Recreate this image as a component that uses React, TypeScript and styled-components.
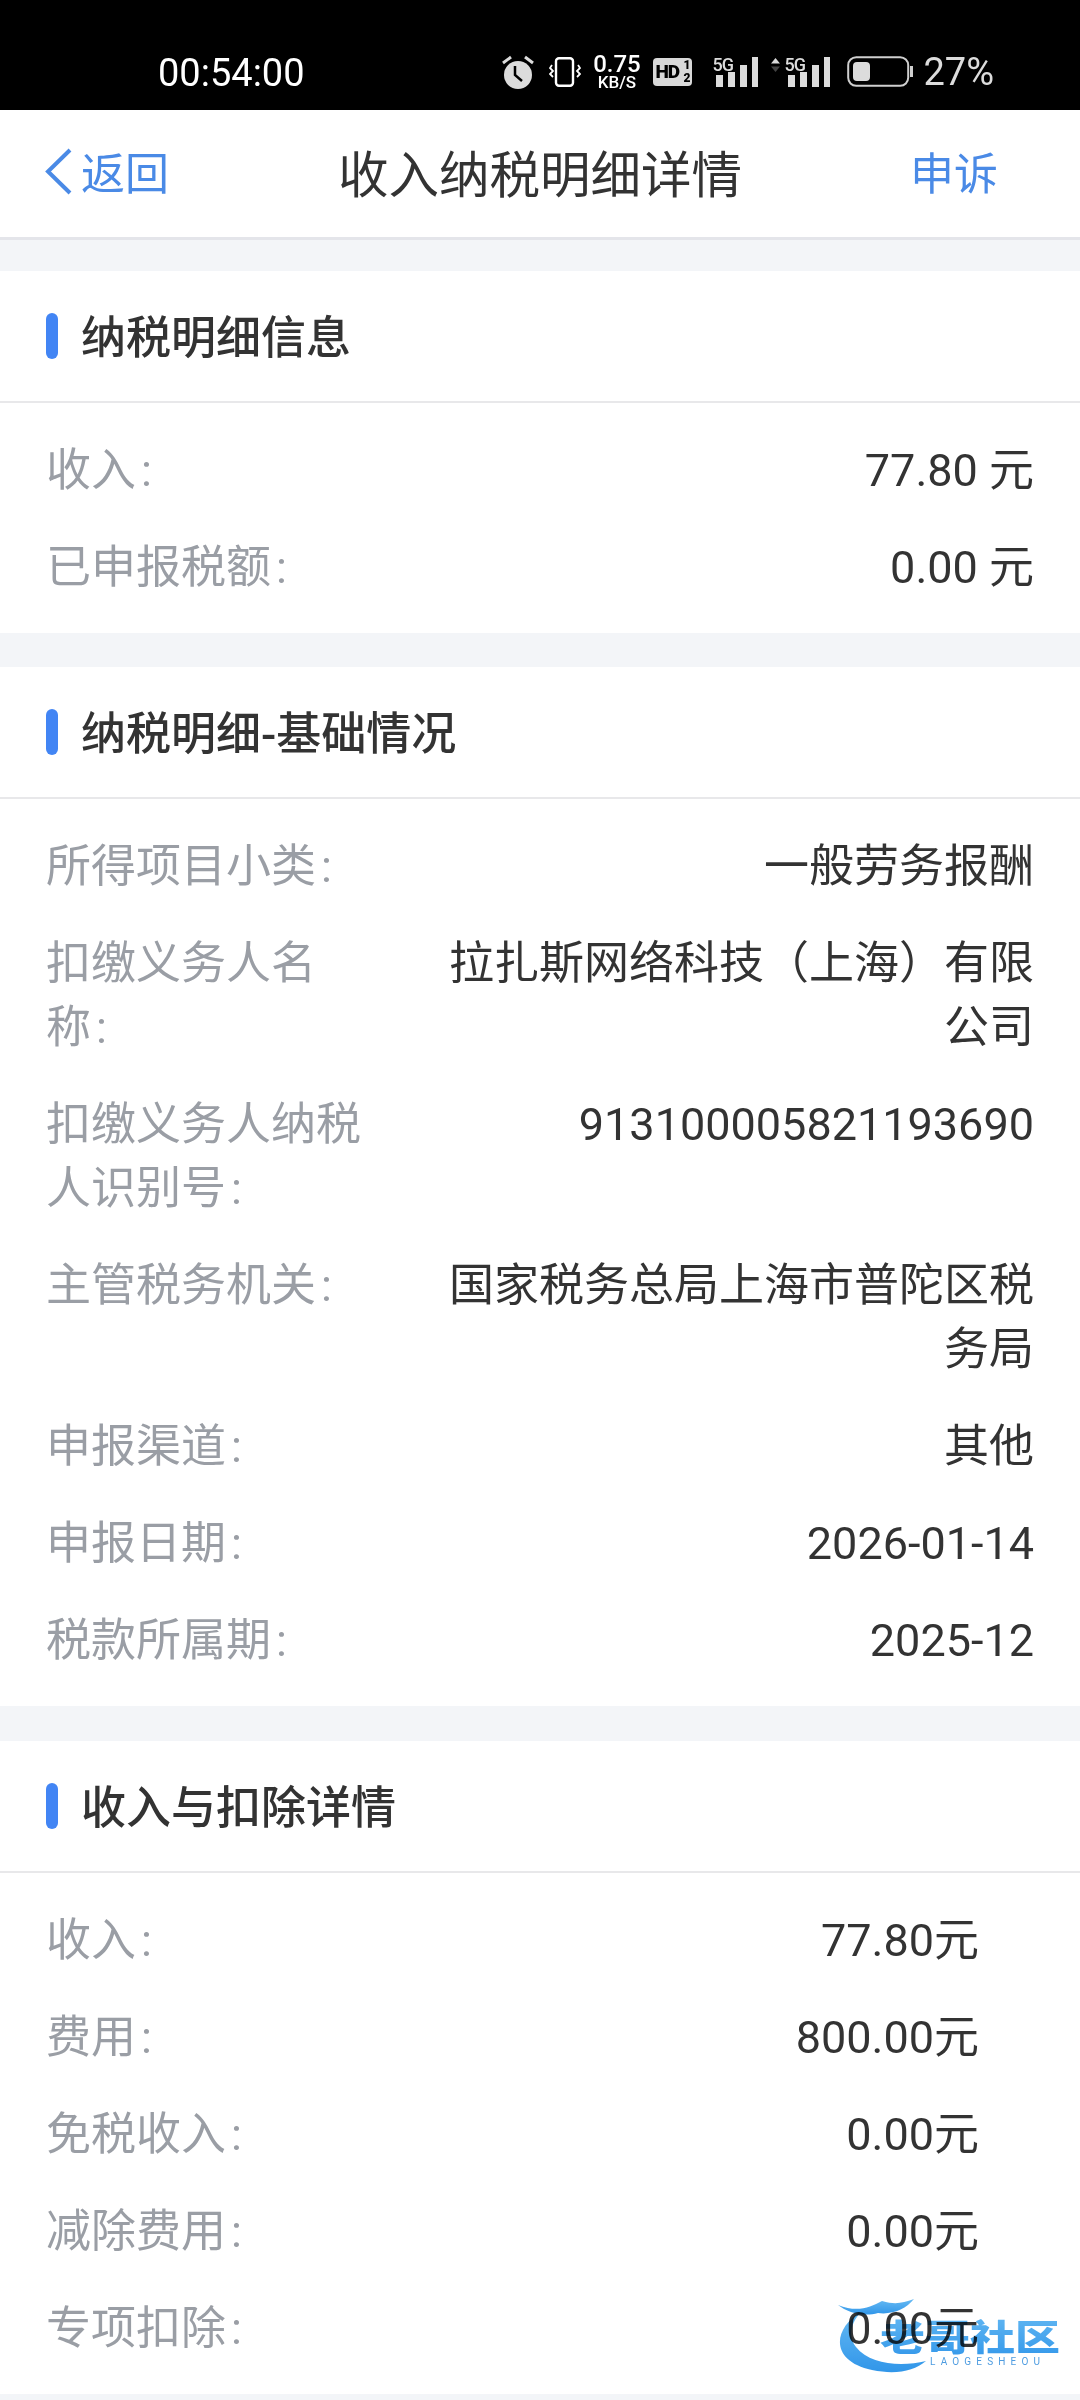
import React from "react";
import styled, { createGlobalStyle } from "styled-components";

const Global = createGlobalStyle`
  html, body { margin: 0; padding: 0; background: #f3f5f8; }
  body { font-family: Roboto, "Noto Sans CJK SC", sans-serif; }
`;

const Page = styled.div`
  position: relative;
  width: 1080px;
  height: 2400px;
  overflow: hidden;
  background: #f3f5f8;
`;

const StatusBar = styled.div`
  height: 110px;
  background: #000;
  color: #e0e0e0;
  display: flex;
  align-items: flex-start;
  padding: 50px 86px 0 158px;
  box-sizing: border-box;
`;
const Time = styled.div`
  color: #fff;
  font-size: 38px;
  line-height: 46px;
`;
const StatusIcons = styled.div`
  margin-left: auto;
  display: flex;
  align-items: center;
  height: 44px;
`;
const Speed = styled.div`
  display: flex;
  flex-direction: column;
  align-items: center;
  width: 47px;
  margin: 0 13px 0 12px;
  color: #fff;
  font-weight: 500;
`;
const SpeedTop = styled.span`
  font-size: 24px;
  line-height: 20px;
`;
const SpeedBottom = styled.span`
  font-size: 17px;
  line-height: 16px;
`;
const HdBadge = styled.div`
  position: relative;
  width: 39px;
  height: 28px;
  background: #d8d8d8;
  border-radius: 4px;
  color: #000;
  font-size: 19px;
  font-weight: 900;
  line-height: 28px;
  padding-left: 2px;
  box-sizing: border-box;
  letter-spacing: -1px;
`;
const HdSub = styled.span`
  position: absolute;
  right: 2px;
  top: 1px;
  font-size: 12px;
  line-height: 13px;
  text-align: center;
  letter-spacing: 0;
`;
const Signal = styled.div<{ $w: number; $ml: number }>`
  position: relative;
  width: ${(p) => p.$w}px;
  height: 30px;
  margin-left: ${(p) => p.$ml}px;
`;
const SignalLabel = styled.span<{ $l: number }>`
  position: absolute;
  font-size: 18px;
  line-height: 15px;
  font-weight: 500;
  color: #dcdcdc;
  left: ${(p) => p.$l}px;
  top: 0;
  letter-spacing: -1px;
`;
const SignalBars = styled.svg`
  position: absolute;
  right: 0;
  top: 0;
`;
const Percent = styled.div`
  margin-left: 10px;
  font-size: 38px;
  line-height: 44px;
  color: #dcdcdc;
`;

const Nav = styled.div`
  height: 130px;
  box-sizing: border-box;
  background: #fff;
  border-bottom: 3px solid #e4e5ea;
  display: grid;
  grid-template-columns: 1fr auto 1fr;
  align-items: center;
  padding: 0 82px 5px;
`;
const Back = styled.div`
  display: flex;
  align-items: center;
  gap: 9px;
  margin-left: -37px;
  color: #4a8ae6;
  font-size: 44px;
`;
const NavTitle = styled.div`
  font-size: 50.5px;
  color: #333;
`;
const NavAction = styled.div`
  justify-self: end;
  color: #4a8ae6;
  font-size: 44px;
`;

const Section = styled.section<{ $top: number }>`
  margin-top: ${(p) => p.$top}px;
  background: #fff;
`;
const SectionHeader = styled.div`
  height: 132px;
  box-sizing: border-box;
  border-bottom: 2px solid #e8e8ea;
  display: flex;
  align-items: center;
  padding-left: 46px;
  gap: 23px;
`;
const Bar = styled.i`
  width: 12px;
  height: 46px;
  border-radius: 6px;
  background: #4285f4;
`;
const SectionTitle = styled.h2`
  margin: 6px 0 0;
  font-size: 45px;
  line-height: 64px;
  font-weight: 500;
  color: #333;
`;
const Body = styled.div`
  padding: 36px 46px 0;
`;
const Row = styled.div`
  display: flex;
  justify-content: space-between;
  align-items: flex-start;
  padding-bottom: 33px;
  font-size: 45px;
  line-height: 64px;
`;
const Label = styled.div`
  width: 322px;
  color: #9a9ea5;
`;
const Colon = styled.span`
  padding-left: 5px;
`;
const Value = styled.div<{ $inset?: boolean }>`
  width: 600px;
  text-align: right;
  color: #333;
  padding-right: ${(p) => (p.$inset ? 55 : 0)}px;
  box-sizing: border-box;
  word-break: break-all;
`;

const Watermark = styled.svg`
  position: absolute;
  left: 830px;
  top: 2295px;
  mix-blend-mode: multiply;
  filter: blur(0.7px);
  opacity: 0.92;
`;

const Bars = () => (
  <SignalBars width="46" height="30" viewBox="0 0 46 30">
    <rect x="4" y="18" width="7" height="12" fill="#dcdcdc" />
    <rect x="16" y="15" width="7" height="15" fill="#dcdcdc" />
    <rect x="28" y="8" width="7" height="22" fill="#dcdcdc" />
    <rect x="40" y="0" width="6" height="30" fill="#dcdcdc" />
  </SignalBars>
);

const info = [["收入", "77.80 元"], ["已申报税额", "0.00 元"]];
const basics = [
  ["所得项目小类", "一般劳务报酬"],
  ["扣缴义务人名称", "拉扎斯网络科技（上海）有限公司"],
  ["扣缴义务人纳税人识别号", "913100005821193690"],
  ["主管税务机关", "国家税务总局上海市普陀区税务局"],
  ["申报渠道", "其他"],
  ["申报日期", "2026-01-14"],
  ["税款所属期", "2025-12"],
];
const details = [
  ["收入", "77.80元"],
  ["费用", "800.00元"],
  ["免税收入", "0.00元"],
  ["减除费用", "0.00元"],
  ["专项扣除", "0.00元"],
];

const Rows = ({ items, inset }: { items: string[][]; inset?: boolean }) => (
  <Body>
    {items.map(([k, v]) => (
      <Row key={k}>
        <Label>
          {k}
          <Colon>:</Colon>
        </Label>
        <Value $inset={inset}>{v}</Value>
      </Row>
    ))}
  </Body>
);

export default function App() {
  return (
    <Page>
      <Global />
      <StatusBar>
        <Time>00:54:00</Time>
        <StatusIcons>
          <svg width="32" height="34" viewBox="0 0 32 34">
            <path d="M1 8 L9 2 M31 8 L23 2" stroke="#dcdcdc" strokeWidth="3" />
            <circle cx="16" cy="20" r="14" fill="#dcdcdc" />
            <path d="M13 11 V20 L20 26" stroke="#000" strokeWidth="2.5" fill="none" />
          </svg>
          <svg width="32" height="30" viewBox="0 0 32 30" style={{ marginLeft: 15 }}>
            <rect x="7" y="1.2" width="17" height="27.5" rx="3" fill="none" stroke="#fff" strokeWidth="2.4" />
            <path d="M3 8 L1 11 L4 14 L1 17 L4 20 M29 8 L31 11 L28 14 L31 17 L28 20" fill="none" stroke="#fff" strokeWidth="1.8" />
          </svg>
          <Speed>
            <SpeedTop>0.75</SpeedTop>
            <SpeedBottom>KB/S</SpeedBottom>
          </Speed>
          <HdBadge>
            HD
            <HdSub>
              1
              <br />2
            </HdSub>
          </HdBadge>
          <Signal $w={46} $ml={20}>
            <SignalLabel $l={0}>5G</SignalLabel>
            <Bars />
          </Signal>
          <Signal $w={60} $ml={12}>
            <svg width="11" height="14" viewBox="0 0 11 14" style={{ position: "absolute", left: 0, top: 1 }}>
              <path d="M5.5 0 L10 5.5 H1 Z" fill="#dcdcdc" />
              <path d="M5.5 14 L10 8.5 H1 Z" fill="#444" />
            </svg>
            <SignalLabel $l={14}>5G</SignalLabel>
            <Bars />
          </Signal>
          <svg width="66" height="32" viewBox="0 0 66 32" style={{ marginLeft: 17 }}>
            <rect x="1.2" y="1.2" width="60" height="28.6" rx="8" fill="none" stroke="#cfcfcf" strokeWidth="2" />
            <rect x="6" y="6" width="17" height="19" rx="4" fill="#dcdcdc" />
            <rect x="63" y="10" width="3" height="11" fill="#cfcfcf" />
          </svg>
          <Percent>27%</Percent>
        </StatusIcons>
      </StatusBar>

      <Nav>
        <Back>
          <svg width="27" height="47" viewBox="0 0 27 47">
            <path d="M25 2 L3 23.5 L25 45" fill="none" stroke="#4a8ae6" strokeWidth="4" />
          </svg>
          <span>返回</span>
        </Back>
        <NavTitle>收入纳税明细详情</NavTitle>
        <NavAction>申诉</NavAction>
      </Nav>

      <Section $top={31}>
        <SectionHeader>
          <Bar />
          <SectionTitle>纳税明细信息</SectionTitle>
        </SectionHeader>
        <Rows items={info} />
      </Section>

      <Section $top={34}>
        <SectionHeader>
          <Bar />
          <SectionTitle>纳税明细-基础情况</SectionTitle>
        </SectionHeader>
        <Rows items={basics} />
      </Section>

      <Section $top={35}>
        <SectionHeader>
          <Bar />
          <SectionTitle>收入与扣除详情</SectionTitle>
        </SectionHeader>
        <Rows items={details} inset />
      </Section>

      <Watermark width="240" height="85" viewBox="0 0 240 85">
        <defs>
          <linearGradient id="wm" x1="0" y1="0" x2="0" y2="1">
            <stop offset="0" stopColor="#59b4f2" />
            <stop offset="1" stopColor="#1f8de8" />
          </linearGradient>
        </defs>
        <path d="M32 16 C2 34 0 66 42 75 C66 80 84 76 96 66 C72 72 40 70 26 52 C18 42 20 28 32 16 Z" fill="url(#wm)" />
        <path d="M8 10 C28 18 40 12 52 6 C66 10 72 8 84 4 C76 14 62 20 48 18 C34 22 18 18 8 10 Z" fill="url(#wm)" />
        <text x="40" y="56" transform="scale(1.25 1)" fontSize="36" fontWeight="900" fill="url(#wm)" fontFamily="Noto Sans CJK SC, sans-serif">老哥社区</text>
        <text x="100" y="70" fontSize="10" textLength="110" fill="#3f94de" fontFamily="Roboto, sans-serif">LAOGESHEOU</text>
      </Watermark>
    </Page>
  );
}
